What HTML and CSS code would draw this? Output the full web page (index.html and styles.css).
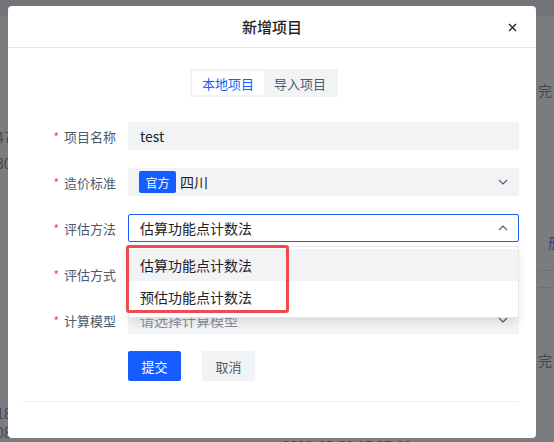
FILE: index.html
```html
<!DOCTYPE html>
<html lang="zh">
<head>
<meta charset="utf-8">
<title>新增项目</title>
<link rel="stylesheet" href="styles.css">
</head>
<body>
<div class="page">
  <div class="bg-band"></div>
  <span class="bg-txt bl1">47</span>
  <span class="bg-txt bl2">30</span>
  <span class="bg-txt bl3">18</span>
  <span class="bg-txt bl4">08</span>
  <span class="bg-txt br1">完</span>
  <span class="bg-txt br2 link">册</span>
  <span class="bg-line bgl1"></span>
  <span class="bg-line bgl2"></span>
  <span class="bg-txt br3">完</span>
  <span class="bg-txt bb1">2023-03-09 17:37:02</span>

  <div class="modal">
    <div class="modal-header">
      <span class="title">新增项目</span>
      <span class="close">
        <svg width="9" height="9" viewBox="0 0 9 9"><path d="M1 1L8 8M8 1L1 8" stroke="#1d2129" stroke-width="1.3" fill="none"/></svg>
      </span>
    </div>
    <div class="modal-body">
      <div class="tabs">
        <div class="seg">
          <span class="seg-item active">本地项目</span>
          <span class="seg-item">导入项目</span>
        </div>
      </div>
      <div class="form">
        <div class="row">
          <label class="label"><span class="star">*</span>项目名称</label>
          <div class="input"><span class="val">test</span></div>
        </div>
        <div class="row">
          <label class="label"><span class="star">*</span>造价标准</label>
          <div class="input">
            <span class="tag">官方</span><span class="val">四川</span>
            <svg class="chev" width="10" height="6" viewBox="0 0 10 6"><path d="M1 1L5 5L9 1" stroke="#4e5969" stroke-width="1.1" fill="none"/></svg>
          </div>
        </div>
        <div class="row">
          <label class="label"><span class="star">*</span>评估方法</label>
          <div class="input focus">
            <span class="val">估算功能点计数法</span>
            <svg class="chev" width="10" height="6" viewBox="0 0 10 6"><path d="M1 5L5 1L9 5" stroke="#4e5969" stroke-width="1.1" fill="none"/></svg>
          </div>
        </div>
        <div class="row">
          <label class="label"><span class="star">*</span>评估方式</label>
          <div class="input">
            <svg class="chev" width="10" height="6" viewBox="0 0 10 6"><path d="M1 1L5 5L9 1" stroke="#4e5969" stroke-width="1.1" fill="none"/></svg>
          </div>
        </div>
        <div class="row">
          <label class="label"><span class="star">*</span>计算模型</label>
          <div class="input">
            <span class="ph">请选择计算模型</span>
            <svg class="chev" width="10" height="6" viewBox="0 0 10 6"><path d="M1 1L5 5L9 1" stroke="#4e5969" stroke-width="1.1" fill="none"/></svg>
          </div>
        </div>
        <div class="actions">
          <button class="btn primary">提交</button>
          <button class="btn">取消</button>
        </div>
      </div>
      <div class="divider"></div>
    </div>

    <div class="dropdown">
      <div class="opt hover">估算功能点计数法</div>
      <div class="opt">预估功能点计数法</div>
    </div>
    <div class="highlight"></div>
  </div>
</div>
</body>
</html>
```

FILE: styles.css
```css
* { box-sizing: border-box; }
html, body { margin: 0; padding: 0; }
body {
  width: 554px;
  height: 442px;
  overflow: hidden;
  font-family: "Noto Sans CJK SC", "Noto Sans", sans-serif;
  background: #7b7c80;
}
.page {
  position: relative;
  width: 554px;
  height: 442px;
  overflow: hidden;
  background: #7b7c80;
}
.bg-band {
  height: 16px;
  background: #737478;
}
.bg-txt {
  position: absolute;
  font-size: 14px;
  line-height: 16px;
  color: #45474b;
  white-space: nowrap;
}
.bg-txt.link { color: #2b3f86; }
.bl1 { left: -4px; top: 129px; }
.bl2 { left: -4px; top: 155px; }
.bl3 { left: -4px; top: 405px; }
.bl4 { left: -4px; top: 424px; }
.br1 { left: 538px; top: 82px; }
.br2 { left: 548px; top: 234px; }
.br3 { left: 538px; top: 352px; }
.bb1 { left: 282px; top: 438px; color: #4a4c50; }
.bg-line {
  position: absolute;
  left: 539px;
  width: 15px;
  height: 1px;
  background: #6d6e72;
}
.bgl1 { top: 270px; }
.bgl2 { top: 287px; }

.modal {
  position: absolute;
  left: 8px;
  top: 6px;
  width: 528px;
  height: 432px;
  background: #fff;
  border-radius: 4px;
}
.modal-header {
  height: 42px;
  border-bottom: 1px solid #e5e6eb;
  display: flex;
  align-items: center;
  justify-content: center;
  position: relative;
}
.title {
  font-size: 15px;
  font-weight: 500;
  color: #1d2129;
}
.close {
  position: absolute;
  right: 19px;
  top: 17px;
  width: 9px;
  height: 9px;
  display: flex;
}
.modal-body {
  padding: 21px 17px 0 15px;
}
.tabs {
  display: flex;
  padding-left: 167px;
}
.seg {
  display: flex;
  background: #f2f3f5;
  border-radius: 2px;
  padding: 2px;
  height: 28px;
}
.seg-item {
  display: flex;
  align-items: center;
  padding: 0 10px;
  font-size: 13px;
  color: #4e5969;
  border-radius: 2px;
  height: 24px;
}
.seg-item.active {
  background: #fff;
  color: #165dff;
}
.form {
  margin-top: 25px;
  display: flex;
  flex-direction: column;
  gap: 18px;
}
.row {
  display: flex;
  align-items: center;
  height: 28px;
}
.label {
  width: 93px;
  margin-right: 12px;
  text-align: right;
  font-size: 13px;
  color: #4e5969;
  white-space: nowrap;
}
.star {
  color: #f53f3f;
  margin-right: 5px;
  font-size: 12px;
}
.input {
  flex: 1;
  height: 28px;
  background: #f2f3f5;
  border: 1px solid transparent;
  border-radius: 2px;
  display: flex;
  align-items: center;
  padding: 0 10px 0 11px;
  font-size: 14px;
  color: #1d2129;
}
.input.focus {
  background: #fff;
  border-color: #165dff;
}
.val { flex: 0 0 auto; }
.ph { color: #86909c; }
.tag {
  display: inline-flex;
  align-items: center;
  justify-content: center;
  width: 37px;
  height: 22px;
  background: #165dff;
  color: #fff;
  font-size: 12px;
  border-radius: 2px;
  margin-right: 4px;
  margin-left: -1px;
}
.chev {
  margin-left: auto;
}
.actions {
  display: flex;
  gap: 21px;
  padding-left: 105px;
  margin-top: -1px;
}
.btn {
  width: 53px;
  height: 30px;
  border: 0;
  border-radius: 2px;
  font-family: inherit;
  font-size: 13px;
  background: #f2f3f5;
  color: #4e5969;
  padding: 0;
}
.btn.primary {
  background: #165dff;
  color: #fff;
}
.divider {
  margin-top: 20px;
  height: 1px;
  background: #eceef2;
}
.dropdown {
  position: absolute;
  left: 120px;
  top: 240px;
  width: 391px;
  padding: 2px 0 4px;
  background: #fff;
  border: 1px solid #e5e6eb;
  border-radius: 2px;
  box-shadow: 0 4px 10px rgba(0, 0, 0, 0.1);
}
.opt {
  height: 32px;
  display: flex;
  align-items: center;
  padding-left: 11px;
  font-size: 14px;
  color: #1d2129;
}
.opt.hover { background: #f2f3f5; }
.highlight {
  position: absolute;
  left: 118px;
  top: 239px;
  width: 163px;
  height: 68px;
  border: 3px solid #ee4a4f;
  border-radius: 3px;
}
```
